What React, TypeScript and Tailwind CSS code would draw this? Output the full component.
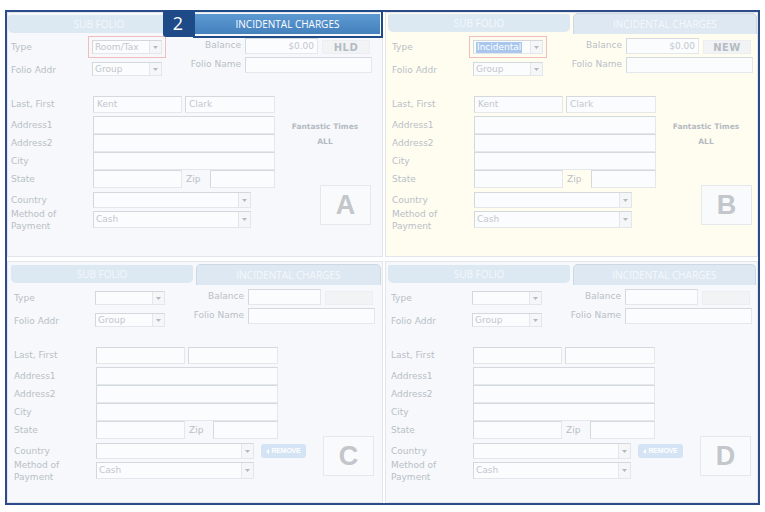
import React from 'react';

type PanelProps = {
  letter: string;
  bg: string;
  tabs: string;
  pl: string;
  active?: boolean;
  typeVal: string;
  typeHl?: boolean;
  outlined?: boolean;
  balance: string;
  status: string;
  last: string;
  first: string;
  fantastic?: boolean;
  remove?: boolean;
};

const lbl = 'w-[82px] shrink-0 text-[9px] leading-[11px] text-[#b9bfc7] whitespace-nowrap';
const valTxt = 'text-[9px] leading-[11px] text-[#c2c7cd] whitespace-nowrap';

function Arrow() {
  return (
    <svg width="5" height="3" viewBox="0 0 5 3">
      <path d="M0 0h5L2.5 3z" fill="#b4b9c0" />
    </svg>
  );
}

function Field({ cls, text, right }: { cls: string; text?: string; right?: boolean }) {
  return (
    <div
      className={`shrink-0 flex items-center border border-[#e5e8eb] border-t-[#d4d9de] border-l-[#d4d9de] bg-[#fbfcfd] px-[3px] ${
        right ? 'justify-end' : ''
      } ${cls}`}
    >
      {text ? <span className={valTxt}>{text}</span> : null}
    </div>
  );
}

function Dropdown({ cls, value, hl, outlined }: { cls: string; value: string; hl?: boolean; outlined?: boolean }) {
  return (
    <div
      className={`shrink-0 flex border border-[#e3e6ea] border-t-[#d3d8dd] border-l-[#d3d8dd] bg-[#fbfcfd] ${
        outlined ? 'outline-1 outline-solid outline-[#f0bcbc] outline-offset-[3px]' : ''
      } ${cls}`}
    >
      <div className="flex-1 flex items-center pl-[2px] overflow-hidden">
        {hl ? (
          <span className="bg-[#a9c6ec] text-white text-[9px] leading-[11px] px-[1px]">{value}</span>
        ) : (
          <span className={valTxt}>{value}</span>
        )}
      </div>
      <div className="w-[12px] flex items-center justify-center border-l border-[#e3e6ea] bg-[#f4f6f8]">
        <Arrow />
      </div>
    </div>
  );
}

function Panel(p: PanelProps) {
  return (
    <div className={`${p.bg} border border-[#e2e5e9] flex flex-col overflow-hidden`}>
      {/* Tabs */}
      <div className={`shrink-0 flex items-start font-['Open_Sans',sans-serif] text-[10px] ${p.tabs}`}>
        <div className="w-[182px] h-[18px] mt-[1px] rounded-b-[5px] rounded-t-[2px] bg-[#dce8f2] flex items-center justify-center text-[#f5f8fb]">
          SUB FOLIO
        </div>
        {p.active ? (
          <div className="flex-1 ml-[5px] h-[20px] bg-linear-to-b from-[#5d9ad2] to-[#4480bc] flex items-center justify-center text-white">
            INCIDENTAL CHARGES
          </div>
        ) : (
          <div className="flex-1 ml-[3px] h-[21px] rounded-t-[5px] border border-b-0 border-[#cdd8e2] bg-[#dde8f2] flex items-center justify-center text-[#f5f8fb]">
            INCIDENTAL CHARGES
          </div>
        )}
      </div>

      <div className={`flex flex-col ${p.pl}`}>
        {/* Type / Balance */}
        <div className="flex items-start h-[17px] mt-[2px]">
          <span className={`${lbl} mt-[4px]`}>Type</span>
          <Dropdown cls="w-[70px] h-[14px] mt-[2px] -ml-[1px]" value={p.typeVal} hl={p.typeHl} outlined={p.outlined} />
          <span className="w-[79px] shrink-0 text-right text-[9px] leading-[11px] text-[#b9bfc7] mt-[2px]">Balance</span>
          <Field cls="w-[73px] h-[16px] ml-[4px]" text={p.balance} right />
          <div className="w-[48px] h-[14px] ml-[4px] mt-[2px] bg-[#f1f3f5] border border-[#eceef1] flex items-center justify-center text-[10px] leading-[11px] font-bold text-[#b6bbc2] tracking-[0.5px]">
            {p.status}
          </div>
        </div>

        {/* Folio Addr / Folio Name */}
        <div className="flex items-start h-[22px]">
          <span className={`${lbl} mt-[10px]`}>Folio Addr</span>
          <Dropdown cls="w-[70px] h-[14px] mt-[7px] -ml-[1px]" value="Group" />
          <span className="w-[79px] shrink-0 text-right text-[9px] leading-[11px] text-[#b9bfc7] mt-[4px]">Folio Name</span>
          <Field cls="w-[127px] h-[16px] ml-[4px] mt-[2px]" />
        </div>

        {/* Lower */}
        <div className="flex mt-[19px]">
          <div className="w-[264px] shrink-0 flex flex-col">
            <div className="flex items-center h-[17px]">
              <span className={lbl}>Last, First</span>
              <Field cls="w-[89px] h-[17px]" text={p.last} />
              <Field cls="w-[90px] h-[17px] ml-[3px]" text={p.first} />
            </div>
            <div className="flex items-center h-[18px] mt-[3px]">
              <span className={lbl}>Address1</span>
              <Field cls="w-[182px] h-[18px]" />
            </div>
            <div className="flex items-center h-[18px]">
              <span className={lbl}>Address2</span>
              <Field cls="w-[182px] h-[18px]" />
            </div>
            <div className="flex items-center h-[18px]">
              <span className={lbl}>City</span>
              <Field cls="w-[182px] h-[18px]" />
            </div>
            <div className="flex items-center h-[18px]">
              <span className={lbl}>State</span>
              <Field cls="w-[89px] h-[18px]" />
              <span className="w-[28px] shrink-0 pl-[4px] text-[9px] leading-[11px] text-[#b9bfc7]">Zip</span>
              <Field cls="w-[65px] h-[18px]" />
            </div>
            <div className="flex items-center h-[16px] mt-[4px]">
              <span className={lbl}>Country</span>
              <Dropdown cls="w-[158px] h-[16px]" value="" />
              {p.remove ? (
                <div className="shrink-0 ml-[7px] w-[45px] h-[14px] rounded-[3px] bg-[#d4e4f4] flex items-center justify-center gap-[2px] text-white text-[7px] font-bold tracking-[-0.2px] font-['Liberation_Sans',sans-serif]">
                  <svg width="3" height="5" viewBox="0 0 3 5">
                    <path d="M3 0v5L0 2.5z" fill="#ffffff" />
                  </svg>
                  REMOVE
                </div>
              ) : null}
            </div>
            <div className="flex items-start h-[17px] mt-[3px]">
              <span className={`${lbl} -mt-[3px] leading-[12px]`}>
                Method of
                <br />
                Payment
              </span>
              <Dropdown cls="w-[158px] h-[17px]" value="Cash" />
            </div>
          </div>

          <div className="w-[100px] shrink-0 flex flex-col pt-[26px]">
            <div
              className={`text-center font-bold text-[7.5px] leading-[10px] text-[#b4bac2] whitespace-nowrap ${
                p.fantastic ? '' : 'invisible'
              }`}
            >
              Fantastic Times
            </div>
            <div
              className={`text-center font-bold text-[7.5px] leading-[10px] text-[#b4bac2] mt-[5px] ${
                p.fantastic ? '' : 'invisible'
              }`}
            >
              ALL
            </div>
            <div className="mt-[38px] ml-[45px] w-[51px] h-[40px] bg-[#f9fafb] border border-[#e6e8eb] flex items-center justify-center">
              <span className="font-['Liberation_Sans',sans-serif] font-bold text-[27px] leading-none text-[#c3c6ca]">
                {p.letter}
              </span>
            </div>
          </div>
        </div>
      </div>
    </div>
  );
}

export default function App() {
  return (
    <div className="w-[765px] h-[512px] bg-white overflow-hidden pt-[10px] pl-[5px] font-['DejaVu_Sans',sans-serif]">
      <div className="relative w-[755px] h-[495px] border-2 border-[#2b4b8b] grid grid-cols-[376px_373px] grid-rows-[245px_242px] gap-x-[2px] gap-y-[4px]">
        <Panel
          letter="A"
          bg="bg-[#f6f8fb]"
          tabs="h-[23px] pt-[1px] pl-0 pr-[2px]"
          pl="pl-[3px]"
          active
          typeVal="Room/Tax"
          outlined
          balance="$0.00"
          status="HLD"
          last="Kent"
          first="Clark"
          fantastic
        />
        <Panel
          letter="B"
          bg="bg-[#fffdf0]"
          tabs="h-[23px] pt-0 pl-[2px] pr-0"
          pl="pl-[6px]"
          typeVal="Incidental"
          typeHl
          outlined
          balance="$0.00"
          status="NEW"
          last="Kent"
          first="Clark"
          fantastic
        />
        <Panel
          letter="C"
          bg="bg-[#f6f8fb]"
          tabs="h-[25px] pt-[2px] pl-[3px] pr-[1px]"
          pl="pl-[6px]"
          typeVal=""
          balance=""
          status=""
          last=""
          first=""
          remove
        />
        <Panel
          letter="D"
          bg="bg-[#f6f8fb]"
          tabs="h-[25px] pt-[2px] pl-[2px] pr-[1px]"
          pl="pl-[5px]"
          typeVal=""
          balance=""
          status=""
          last=""
          first=""
          remove
        />

        {/* step annotation */}
        <div className="absolute left-[156px] -top-[2px] w-[30px] h-[27px] rounded-l-[3px] bg-[#1e4a87] flex items-center justify-center text-white text-[18px] font-['Open_Sans',sans-serif]">
          2
        </div>
        <div className="absolute left-[186px] -top-[2px] w-[190px] h-[28px] border-2 border-[#1e4a87]" />
      </div>
    </div>
  );
}
